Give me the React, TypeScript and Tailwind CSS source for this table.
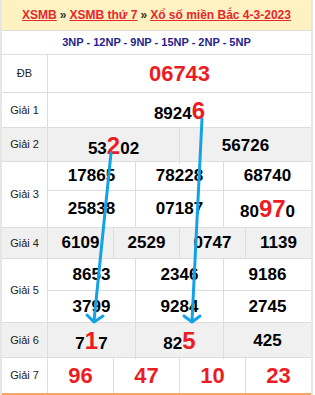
import React from "react";

const R = "text-[#ed1c24]";

function Big({ children }: { children: React.ReactNode }) {
  return <span className={`${R} text-[24px]`}>{children}</span>;
}

function Cell({ children, gray, last }: { children: React.ReactNode; gray?: boolean; last?: boolean }) {
  return (
    <div
      className={`flex-1 flex items-center justify-center font-bold text-[17px] text-black ${
        last ? "" : "border-r border-[#dddddd]"
      } ${gray ? "bg-[#f0f0f0]" : ""}`}
    >
      <span>{children}</span>
    </div>
  );
}

function Row({
  label,
  h,
  gray,
  children,
  orange,
}: {
  label: string;
  h: string;
  gray?: boolean;
  children: React.ReactNode;
  orange?: boolean;
}) {
  return (
    <div
      className={`flex ${h} ${orange ? "border-b-2 border-[#f2a766]" : "border-b border-[#dddddd]"} ${
        gray ? "bg-[#f0f0f0]" : "bg-white"
      }`}
    >
      <div className="w-[46px] shrink-0 border-r border-[#dddddd] flex items-center justify-center text-[11px] text-[#222]">
        {label}
      </div>
      <div className="flex-1 flex flex-col">{children}</div>
    </div>
  );
}

export default function App() {
  return (
    <div
      className="relative w-[315px] h-[395px] bg-white overflow-hidden"
      style={{ fontFamily: '"Liberation Sans", Arial, sans-serif' }}
    >
      <div className="w-[313px] border-x-2 border-[#e6e6e6]">
        <div className="h-[31px] border-b border-[#dddddd] bg-[#fff2c2] flex items-center justify-center text-[12px] font-bold whitespace-nowrap">
          <span className="text-[#e8262d] underline">XSMB</span>
          <span className="text-[#333] mx-[3px]">»</span>
          <span className="text-[#e8262d] underline">XSMB thứ 7</span>
          <span className="text-[#333] mx-[3px]">»</span>
          <span className="text-[#e8262d] underline">Xổ số miền Bắc 4-3-2023</span>
        </div>
        <div className="h-[24px] border-b border-[#dddddd] flex items-center justify-center text-[11px] font-bold text-[#23238c] whitespace-nowrap">
          3NP - 12NP - 9NP - 15NP - 2NP - 5NP
        </div>
        <Row label="ĐB" h="h-[38px]">
          <div className="flex-1 flex items-center justify-center font-bold text-[22px] text-[#ed1c24]">06743</div>
        </Row>
        <Row label="Giải 1" h="h-[35px]">
          <div className="flex-1 flex items-center justify-center font-bold text-[17px] text-black">
            <span>
              8924<Big>6</Big>
            </span>
          </div>
        </Row>
        <Row label="Giải 2" h="h-[34px]" gray>
          <div className="flex-1 flex">
            <Cell>
              53<Big>2</Big>02
            </Cell>
            <Cell last>56726</Cell>
          </div>
        </Row>
        <Row label="Giải 3" h="h-[66px]">
          <div className="flex-1 flex border-b border-[#dddddd]">
            <Cell>17865</Cell>
            <Cell>78228</Cell>
            <Cell last>68740</Cell>
          </div>
          <div className="flex-1 flex">
            <Cell>25838</Cell>
            <Cell>07187</Cell>
            <Cell last>
              80<Big>97</Big>0
            </Cell>
          </div>
        </Row>
        <Row label="Giải 4" h="h-[31px]" gray>
          <div className="flex-1 flex">
            <Cell>6109</Cell>
            <Cell>2529</Cell>
            <Cell>0747</Cell>
            <Cell last>1139</Cell>
          </div>
        </Row>
        <Row label="Giải 5" h="h-[64px]">
          <div className="flex-1 flex border-b border-[#dddddd]">
            <Cell>8653</Cell>
            <Cell>2346</Cell>
            <Cell last>9186</Cell>
          </div>
          <div className="flex-1 flex">
            <Cell>3799</Cell>
            <Cell>9284</Cell>
            <Cell last>2745</Cell>
          </div>
        </Row>
        <Row label="Giải 6" h="h-[35px]" gray>
          <div className="flex-1 flex">
            <Cell>
              7<Big>1</Big>7
            </Cell>
            <Cell>
              82<Big>5</Big>
            </Cell>
            <Cell last>425</Cell>
          </div>
        </Row>
        <Row label="Giải 7" h="h-[37px]" orange>
          <div className="flex-1 flex text-[#ed1c24]">
            {["96", "47", "10", "23"].map((n, i) => (
              <div
                key={n}
                className={`flex-1 flex items-center justify-center font-bold text-[22px] ${
                  i < 3 ? "border-r border-[#dddddd]" : ""
                }`}
              >
                {n}
              </div>
            ))}
          </div>
        </Row>
      </div>
      <svg className="absolute left-0 top-0 pointer-events-none" width="315" height="395" viewBox="0 0 315 395">
        <g stroke="#14a2e6" strokeWidth="3" fill="none" strokeLinecap="round" strokeLinejoin="round">
          <line x1="111" y1="153" x2="94" y2="321" />
          <polyline points="87,315 94,322 103,316" />
          <line x1="202" y1="119" x2="192" y2="321" />
          <polyline points="184,316 192,322 200,316" />
        </g>
      </svg>
    </div>
  );
}
